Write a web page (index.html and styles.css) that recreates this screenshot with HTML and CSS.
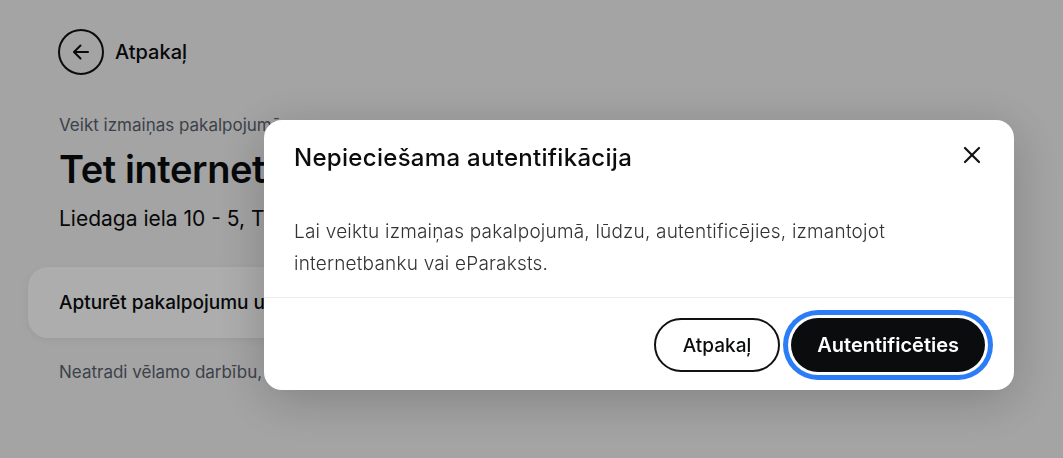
FILE: index.html
```html
<!DOCTYPE html>
<html lang="lv">
<head>
    <meta charset="UTF-8" />
    <meta name="viewport" content="width=device-width, initial-scale=1.0" />
    <title>Veikt izmaiņas pakalpojumā</title>
    <link rel="stylesheet" href="styles.css">
</head>
<body>
    <div class="page">
        <a class="back-link" href="#">
            <span class="back-link__circle">
                <svg width="20" height="20" viewBox="0 0 20 20" fill="none" stroke="#111" stroke-width="2" stroke-linecap="round" stroke-linejoin="round">
                    <path d="M17 10H3.5" />
                    <path d="M9.5 3.5L3 10l6.5 6.5" />
                </svg>
            </span>
            Atpakaļ
        </a>

        <div class="service-info">
            <div class="service-info__label">Veikt izmaiņas pakalpojumā</div>
            <h1 class="service-info__title">Tet internets</h1>
            <div class="service-info__address">Liedaga iela 10 - 5, Tukums</div>
        </div>

        <div class="action-card">Apturēt pakalpojumu uz laiku</div>

        <p class="help-text">Neatradi vēlamo darbību, sazinies ar mums</p>
    </div>

    <!-- Authentication dialog -->
    <div class="overlay">
        <div class="modal" role="dialog" aria-labelledby="modal-title">
            <div class="modal__header">
                <h2 id="modal-title" class="modal__title">Nepieciešama autentifikācija</h2>
                <button class="modal__close" aria-label="Aizvērt">
                    <svg width="18" height="18" viewBox="0 0 18 18" fill="none" stroke="#111" stroke-width="2.2" stroke-linecap="round">
                        <path d="M2 2l14 14" />
                        <path d="M16 2L2 16" />
                    </svg>
                </button>
            </div>
            <div class="modal__body">
                Lai veiktu izmaiņas pakalpojumā, lūdzu, autentificējies, izmantojot internetbanku vai eParaksts.
            </div>
            <div class="modal__footer">
                <button class="btn btn--outline">Atpakaļ</button>
                <button class="btn btn--primary">Autentificēties</button>
            </div>
        </div>
    </div>
</body>
</html>
```

FILE: styles.css
```css
/* General styles */
body {
    margin: 0;
    background: #f2f2f2;
    font-family: "Inter", "Noto Sans", sans-serif;
    color: #0b0c0e;
}

.page {
    padding: 29px 28px 0;
}

.back-link {
    display: flex;
    align-items: center;
    gap: 11px;
    margin-left: 30px;
    color: #0b0c0e;
    text-decoration: none;
    font-size: 20px;
    font-weight: 500;
}

.back-link__circle {
    width: 42px;
    height: 42px;
    border: 2px solid #111;
    border-radius: 50%;
    display: flex;
    align-items: center;
    justify-content: center;
}

.service-info {
    margin: 38px 0 0 31px;
}

.service-info__label {
    font-size: 17px;
    line-height: 24px;
    color: #5b616e;
}

.service-info__title {
    margin: 9px 0 0;
    font-size: 38px;
    line-height: 46px;
    font-weight: 600;
    letter-spacing: -0.4px;
}

.service-info__address {
    margin-top: 13px;
    font-size: 21px;
    line-height: 28px;
}

.action-card {
    margin-top: 34px;
    width: 900px;
    height: 71px;
    box-sizing: border-box;
    padding: 0 31px;
    display: flex;
    align-items: center;
    background: #fff;
    border-radius: 20px;
    box-shadow: 0 2px 8px rgba(0, 0, 0, 0.06);
    font-size: 19px;
    font-weight: 500;
}

.help-text {
    margin: 22px 0 0 31px;
    font-size: 17px;
    line-height: 24px;
    color: #5b616e;
}

/* Dialog */
.overlay {
    position: fixed;
    inset: 0;
    background: rgba(0, 0, 0, 0.32);
}

.modal {
    position: absolute;
    left: 264px;
    top: 120px;
    width: 750px;
    background: #fff;
    border-radius: 18px;
    box-shadow: 0 10px 50px rgba(0, 0, 0, 0.22);
}

.modal__header {
    display: flex;
    align-items: flex-start;
    justify-content: space-between;
    padding: 24px 31px 0 30px;
}

.modal__title {
    margin: 0;
    font-size: 24px;
    line-height: 28px;
    font-weight: 500;
    letter-spacing: 0.3px;
}

.modal__close {
    border: none;
    background: none;
    padding: 0;
    width: 22px;
    height: 22px;
    display: flex;
    align-items: center;
    justify-content: center;
    cursor: pointer;
}

.modal__body {
    padding: 44px 50px 17px 30px;
    font-size: 19px;
    line-height: 32px;
    font-weight: 300;
    letter-spacing: 0.2px;
    color: #333;
    border-bottom: 1px solid #ececec;
}

.modal__footer {
    display: flex;
    justify-content: flex-end;
    gap: 11px;
    padding: 20px 29px 18px;
}

.btn {
    height: 54px;
    border-radius: 27px;
    font-family: inherit;
    cursor: pointer;
}

.btn--outline {
    padding: 0 27px;
    background: #fff;
    border: 2px solid #111;
    color: #0b0c0e;
    font-size: 19px;
    font-weight: 500;
}

.btn--primary {
    padding: 0 26px;
    background: #0b0c0e;
    border: none;
    color: #fff;
    font-size: 20px;
    font-weight: 600;
    box-shadow: 0 0 0 3px #fff, 0 0 0 8px #2a7df6;
}
```
